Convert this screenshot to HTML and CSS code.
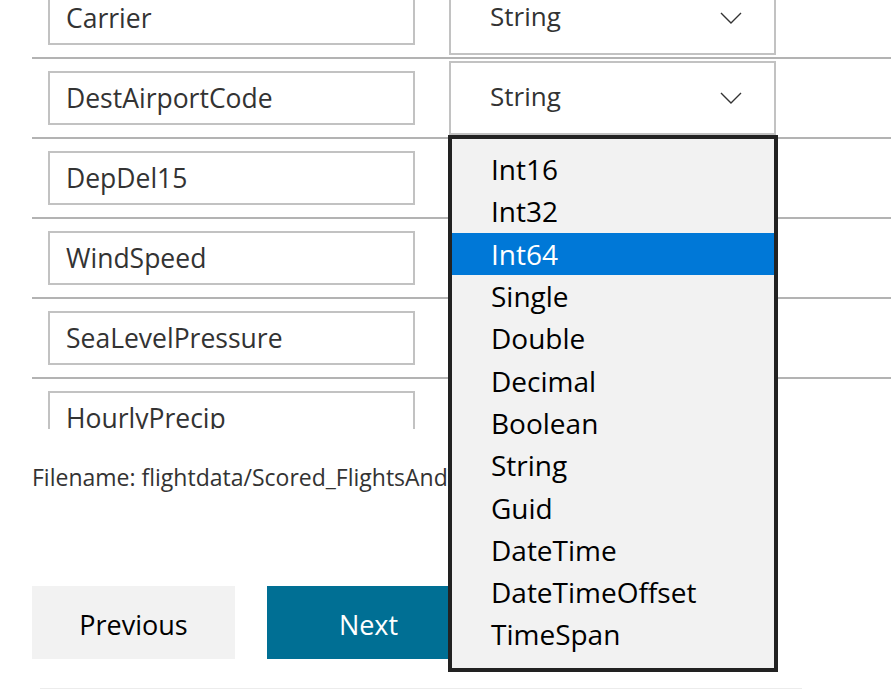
FILE: index.html
```html
<!DOCTYPE html>
<html lang="en">
<head>
<meta charset="utf-8">
<title>Schema mapping</title>
<link rel="stylesheet" href="styles.css">
</head>
<body>
<div class="page">
  <div class="viewport">
    <div class="rows">
      <div class="row">
        <div class="field">Carrier</div>
        <div class="select"><span>String</span><svg class="chev" width="22" height="12" viewBox="0 0 22 12"><polyline points="1,1 11,11 21,1"/></svg></div>
      </div>
      <div class="row">
        <div class="field">DestAirportCode</div>
        <div class="select"><span>String</span><svg class="chev" width="22" height="12" viewBox="0 0 22 12"><polyline points="1,1 11,11 21,1"/></svg></div>
      </div>
      <div class="row">
        <div class="field">DepDel15</div>
        <div class="select"></div>
      </div>
      <div class="row">
        <div class="field">WindSpeed</div>
        <div class="select"></div>
      </div>
      <div class="row">
        <div class="field">SeaLevelPressure</div>
        <div class="select"></div>
      </div>
      <div class="row">
        <div class="field">HourlyPrecip</div>
        <div class="select"></div>
      </div>
    </div>
  </div>

  <p class="filename">Filename: flightdata/Scored_FlightsAndWeather.csv</p>

  <div class="actions">
    <button class="btn btn-secondary">Previous</button>
    <button class="btn btn-primary">Next</button>
  </div>

  <div class="footer-line"></div>

  <ul class="dropdown">
    <li class="option">Int16</li>
    <li class="option">Int32</li>
    <li class="option selected">Int64</li>
    <li class="option">Single</li>
    <li class="option">Double</li>
    <li class="option">Decimal</li>
    <li class="option">Boolean</li>
    <li class="option">String</li>
    <li class="option">Guid</li>
    <li class="option">DateTime</li>
    <li class="option">DateTimeOffset</li>
    <li class="option">TimeSpan</li>
  </ul>
</div>
</body>
</html>
```

FILE: styles.css
```css
html, body {
  margin: 0;
  padding: 0;
  background: #ffffff;
}

body {
  font-family: "Open Sans", "Noto Sans", "Liberation Sans", sans-serif;
  color: #333333;
}

.page {
  position: relative;
  width: 891px;
  height: 689px;
  overflow: hidden;
}

.viewport {
  height: 429px;
  overflow: hidden;
}

.rows {
  margin-top: -21px;
  margin-left: 32px;
}

.row {
  display: flex;
  align-items: center;
  height: 78px;
  border-bottom: 2px solid #b3b3b3;
}

.field {
  box-sizing: border-box;
  margin-left: 16px;
  width: 367px;
  height: 54px;
  border: 2px solid #c2c2c2;
  padding-left: 16px;
  display: flex;
  align-items: center;
  font-size: 26.5px;
  color: #333333;
  white-space: nowrap;
}

.select {
  box-sizing: border-box;
  margin-left: 34px;
  width: 327px;
  height: 74px;
  border: 2px solid #c2c2c2;
  padding-left: 39px;
  padding-right: 32px;
  padding-bottom: 4px;
  display: flex;
  align-items: center;
  justify-content: space-between;
  font-size: 26px;
  color: #333333;
}

.chev {
  margin-top: 3px;
}

.chev polyline {
  fill: none;
  stroke: #333333;
  stroke-width: 1.4;
}

.filename {
  margin: 34px 0 0 32px;
  font-size: 23px;
  line-height: 29px;
  color: #333333;
  white-space: nowrap;
}

.actions {
  display: flex;
  gap: 32px;
  margin: 94px 0 0 32px;
}

.btn {
  box-sizing: border-box;
  width: 203px;
  height: 73px;
  border: none;
  padding: 4px 0 0 0;
  font-family: inherit;
  font-size: 27px;
  line-height: 69px;
}

.btn-secondary {
  background: #f2f2f2;
  color: #000000;
}

.btn-primary {
  background: #006f94;
  color: #ffffff;
}

.footer-line {
  margin: 29px 0 0 40px;
  width: 762px;
  border-top: 1px solid #ececec;
}

.dropdown {
  position: absolute;
  left: 448px;
  top: 135px;
  width: 330px;
  box-sizing: border-box;
  margin: 0;
  padding: 9px 0 12px;
  list-style: none;
  background: #f2f2f2;
  border: 4px solid #222222;
}

.option {
  height: 42.3px;
  display: flex;
  align-items: center;
  padding-left: 39px;
  font-size: 28px;
  color: #000000;
}

.option.selected {
  background: #0078d7;
  color: #ffffff;
}
```
